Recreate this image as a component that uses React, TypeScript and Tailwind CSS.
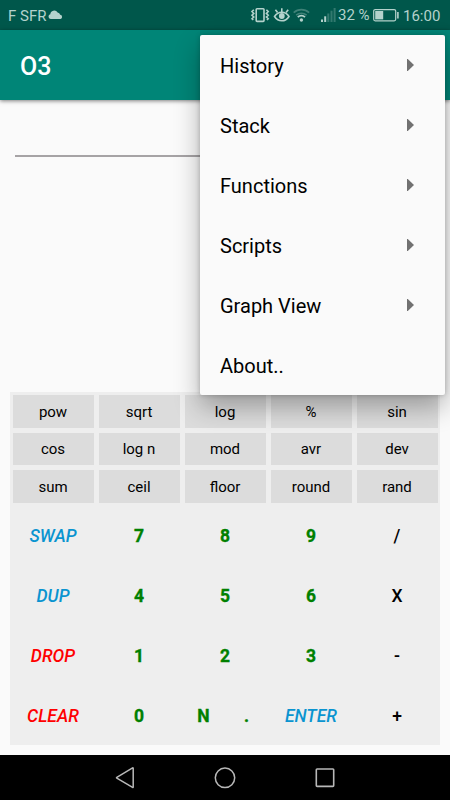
import clsx from "clsx";

type Key = { label: string; kind: "num" | "stack" | "danger" | "op" };

const MENU_ITEMS = [
  { label: "History", submenu: true },
  { label: "Stack", submenu: true },
  { label: "Functions", submenu: true },
  { label: "Scripts", submenu: true },
  { label: "Graph View", submenu: true },
  { label: "About..", submenu: false },
];

const FUNCTION_KEYS = [
  "pow", "sqrt", "log", "%", "sin",
  "cos", "log n", "mod", "avr", "dev",
  "sum", "ceil", "floor", "round", "rand",
];

// each cell holds one or two keys
const KEYPAD: Key[][] = [
  [{ label: "SWAP", kind: "stack" }],
  [{ label: "7", kind: "num" }],
  [{ label: "8", kind: "num" }],
  [{ label: "9", kind: "num" }],
  [{ label: "/", kind: "op" }],
  [{ label: "DUP", kind: "stack" }],
  [{ label: "4", kind: "num" }],
  [{ label: "5", kind: "num" }],
  [{ label: "6", kind: "num" }],
  [{ label: "X", kind: "op" }],
  [{ label: "DROP", kind: "danger" }],
  [{ label: "1", kind: "num" }],
  [{ label: "2", kind: "num" }],
  [{ label: "3", kind: "num" }],
  [{ label: "-", kind: "op" }],
  [{ label: "CLEAR", kind: "danger" }],
  [{ label: "0", kind: "num" }],
  [
    { label: "N", kind: "num" },
    { label: ".", kind: "num" },
  ],
  [{ label: "ENTER", kind: "stack" }],
  [{ label: "+", kind: "op" }],
];

const KEY_STYLES = {
  num: "font-bold text-[#008000] [-webkit-text-stroke:0.35px_#008000]",
  stack: "font-medium italic text-[#0a94d0]",
  danger: "font-medium italic text-[#ff0000]",
  op: "font-medium text-black",
};

function StatusIcons() {
  return (
    <svg width="88" height="30" viewBox="250 0 88 30" fill="none" stroke="#b4d2cc">
      {/* vibrate */}
      <rect x="256.2" y="8.8" width="7.8" height="12.6" rx="0.8" strokeWidth="1.6" />
      <path d="M253.800 9.800l-1.800 1.800 1.800 1.800-1.800 1.800 1.800 1.800-1.800 1.800 1.300 1.200M266.400 9.800l1.800 1.800-1.800 1.800 1.800 1.800-1.800 1.800 1.800 1.800-1.300 1.200" strokeWidth="1.6" />
      {/* eye */}
      <path d="M274.500 16.500c2-3 4.500-4.200 7.300-4.200s5.300 1.200 7.200 4.200c-1.900 3-4.400 4.300-7.200 4.300s-5.300-1.300-7.300-4.300z" strokeWidth="1.6" />
      <path d="M281.800 12.500V8.300M277.600 12.600l-2.200-2.900M286 12.600l2.200-2.900" strokeWidth="1.600" />
      <circle cx="281.800" cy="16" r="2.900" fill="#b4d2cc" stroke="none" />
      {/* wifi */}
      <path d="M293.700 12.600a11.400 11.400 0 0 1 15.400 0" strokeWidth="1.600" opacity="0.35" />
      <path d="M296.200 15.200a7.700 7.700 0 0 1 10.400 0" strokeWidth="1.600" opacity="0.35" />
      <path d="M297.800 17.200a5.100 5.100 0 0 1 7.200 0" strokeWidth="1.800" />
      <circle cx="301.400" cy="20" r="1.700" fill="#b4d2cc" stroke="none" />
      {/* signal */}
      <g fill="#b4d2cc" stroke="none">
        <rect x="321" y="19.500" width="2" height="2.500" />
        <rect x="324.200" y="16.300" width="2" height="5.700" />
        <g opacity="0.28">
          <rect x="327.300" y="13.500" width="2" height="8.500" />
          <rect x="330.500" y="10.700" width="2" height="11.300" />
          <rect x="333.600" y="8" width="2" height="14" />
        </g>
      </g>
    </svg>
  );
}

function StatusBar() {
  return (
    <div className="flex h-[30px] items-center bg-[#00574b] pl-[8px] text-[15px] leading-[30px] whitespace-pre text-[#b4d2cc]">
      <span className="mt-px w-[39.5px]">F SFR</span>
      <svg width="15" height="10" viewBox="0 0 15 10" fill="#b4d2cc">
        <path d="M2.600 9A2.400 2.400 0 0 1 2.300 4.300 3.900 3.900 0 0 1 9.600 2.600a3.200 3.200 0 0 1 2.600 2.200A2.150 2.150 0 0 1 12.500 9z" />
      </svg>
      <div className="ml-[187.5px] flex items-center">
        <StatusIcons />
        <span className="w-[35px] text-[15px]">32 %</span>
        <svg width="27" height="14" viewBox="0 0 27 14" className="mb-px" fill="none" stroke="#b4d2cc">
          <rect x="0.700" y="1.600" width="22" height="11.200" rx="1.500" strokeWidth="1.200" />
          <rect x="2.200" y="3" width="8" height="8.400" fill="#b4d2cc" stroke="none" />
          <path d="M24.900 4v6.500" strokeWidth="1.600" />
        </svg>
        <span className="mt-px ml-[3px]">16:00</span>
      </div>
    </div>
  );
}

function OverflowMenu() {
  return (
    <div className="absolute top-[35px] left-[200px] w-[245px] rounded-[2px] bg-[#fafafa] shadow-[0_12px_26px_rgba(0,0,0,0.3),0_0_5px_rgba(0,0,0,0.22)]">
      {MENU_ITEMS.map((item) => (
        <div
          key={item.label}
          className="flex h-[60px] items-center justify-between pr-[31px] pl-[20px] text-[20px] text-black"
        >
          <span className="mt-px">{item.label}</span>
          {item.submenu && (
            <svg width="7" height="12" viewBox="0 0 7 12" fill="#717171">
              <path d="M0 0h0.800L7 6 0.800 12H0z" />
            </svg>
          )}
        </div>
      ))}
    </div>
  );
}

function Keyboard() {
  return (
    <div className="mx-[10px] h-[353px] bg-[#eeeeee] pt-px">
      <div className="grid grid-cols-5">
        {FUNCTION_KEYS.map((label) => (
          <div key={label} className="h-[37.5px] px-[2.5px] pt-[2px] pb-[3px]">
            <button className="flex h-full w-full items-center justify-center bg-[#dcdcdc] pt-px text-[15px] text-black">
              {label}
            </button>
          </div>
        ))}
      </div>
      <div className="grid grid-cols-5">
        {KEYPAD.map((cell, i) => (
          <div key={i} className="flex h-[60px]">
            {cell.map((key) => (
              <button
                key={key.label}
                className={clsx("flex-1 pt-[2px] text-center text-[17.5px]", KEY_STYLES[key.kind])}
              >
                {key.label}
              </button>
            ))}
          </div>
        ))}
      </div>
    </div>
  );
}

function NavBar() {
  return (
    <div className="flex h-[45px] items-center justify-center gap-[76px] bg-black">
      <svg width="24" height="24" viewBox="0 0 24 24" fill="none" stroke="#b8b8b8" strokeWidth="1.500" strokeLinejoin="round">
        <path d="M19.600 1.900q0.600-0.300 0.600 0.400v18.600q0 0.700-0.600 0.400L3.800 12.100q-0.600-0.400 0-0.800z" />
      </svg>
      <svg width="24" height="24" viewBox="0 0 24 24" fill="none" stroke="#b8b8b8" strokeWidth="1.500">
        <circle cx="12" cy="11.800" r="9.700" />
      </svg>
      <svg width="24" height="24" viewBox="0 0 24 24" fill="none" stroke="#b8b8b8" strokeWidth="1.600">
        <rect x="3.300" y="3" width="17.400" height="17.400" rx="0.800" />
      </svg>
    </div>
  );
}

export default function App() {
  return (
    <div className="relative flex h-[800px] w-[450px] flex-col overflow-hidden bg-[#fafafa] font-['Roboto',sans-serif]">
      <StatusBar />
      <header className="flex h-[70px] items-center bg-[#008577] pt-[4px] pl-[20px] shadow-[0_1px_4px_rgba(0,0,0,0.5)]">
        <h1 className="text-[25px] font-medium text-white">O3</h1>
      </header>
      <main className="flex flex-1 flex-col">
        <div className="mx-[15px] h-[57px] border-b-2 border-[#a6a3a5]" />
        <div className="flex-1" />
        <Keyboard />
        <div className="h-[10px]" />
      </main>
      <NavBar />
      <OverflowMenu />
    </div>
  );
}
